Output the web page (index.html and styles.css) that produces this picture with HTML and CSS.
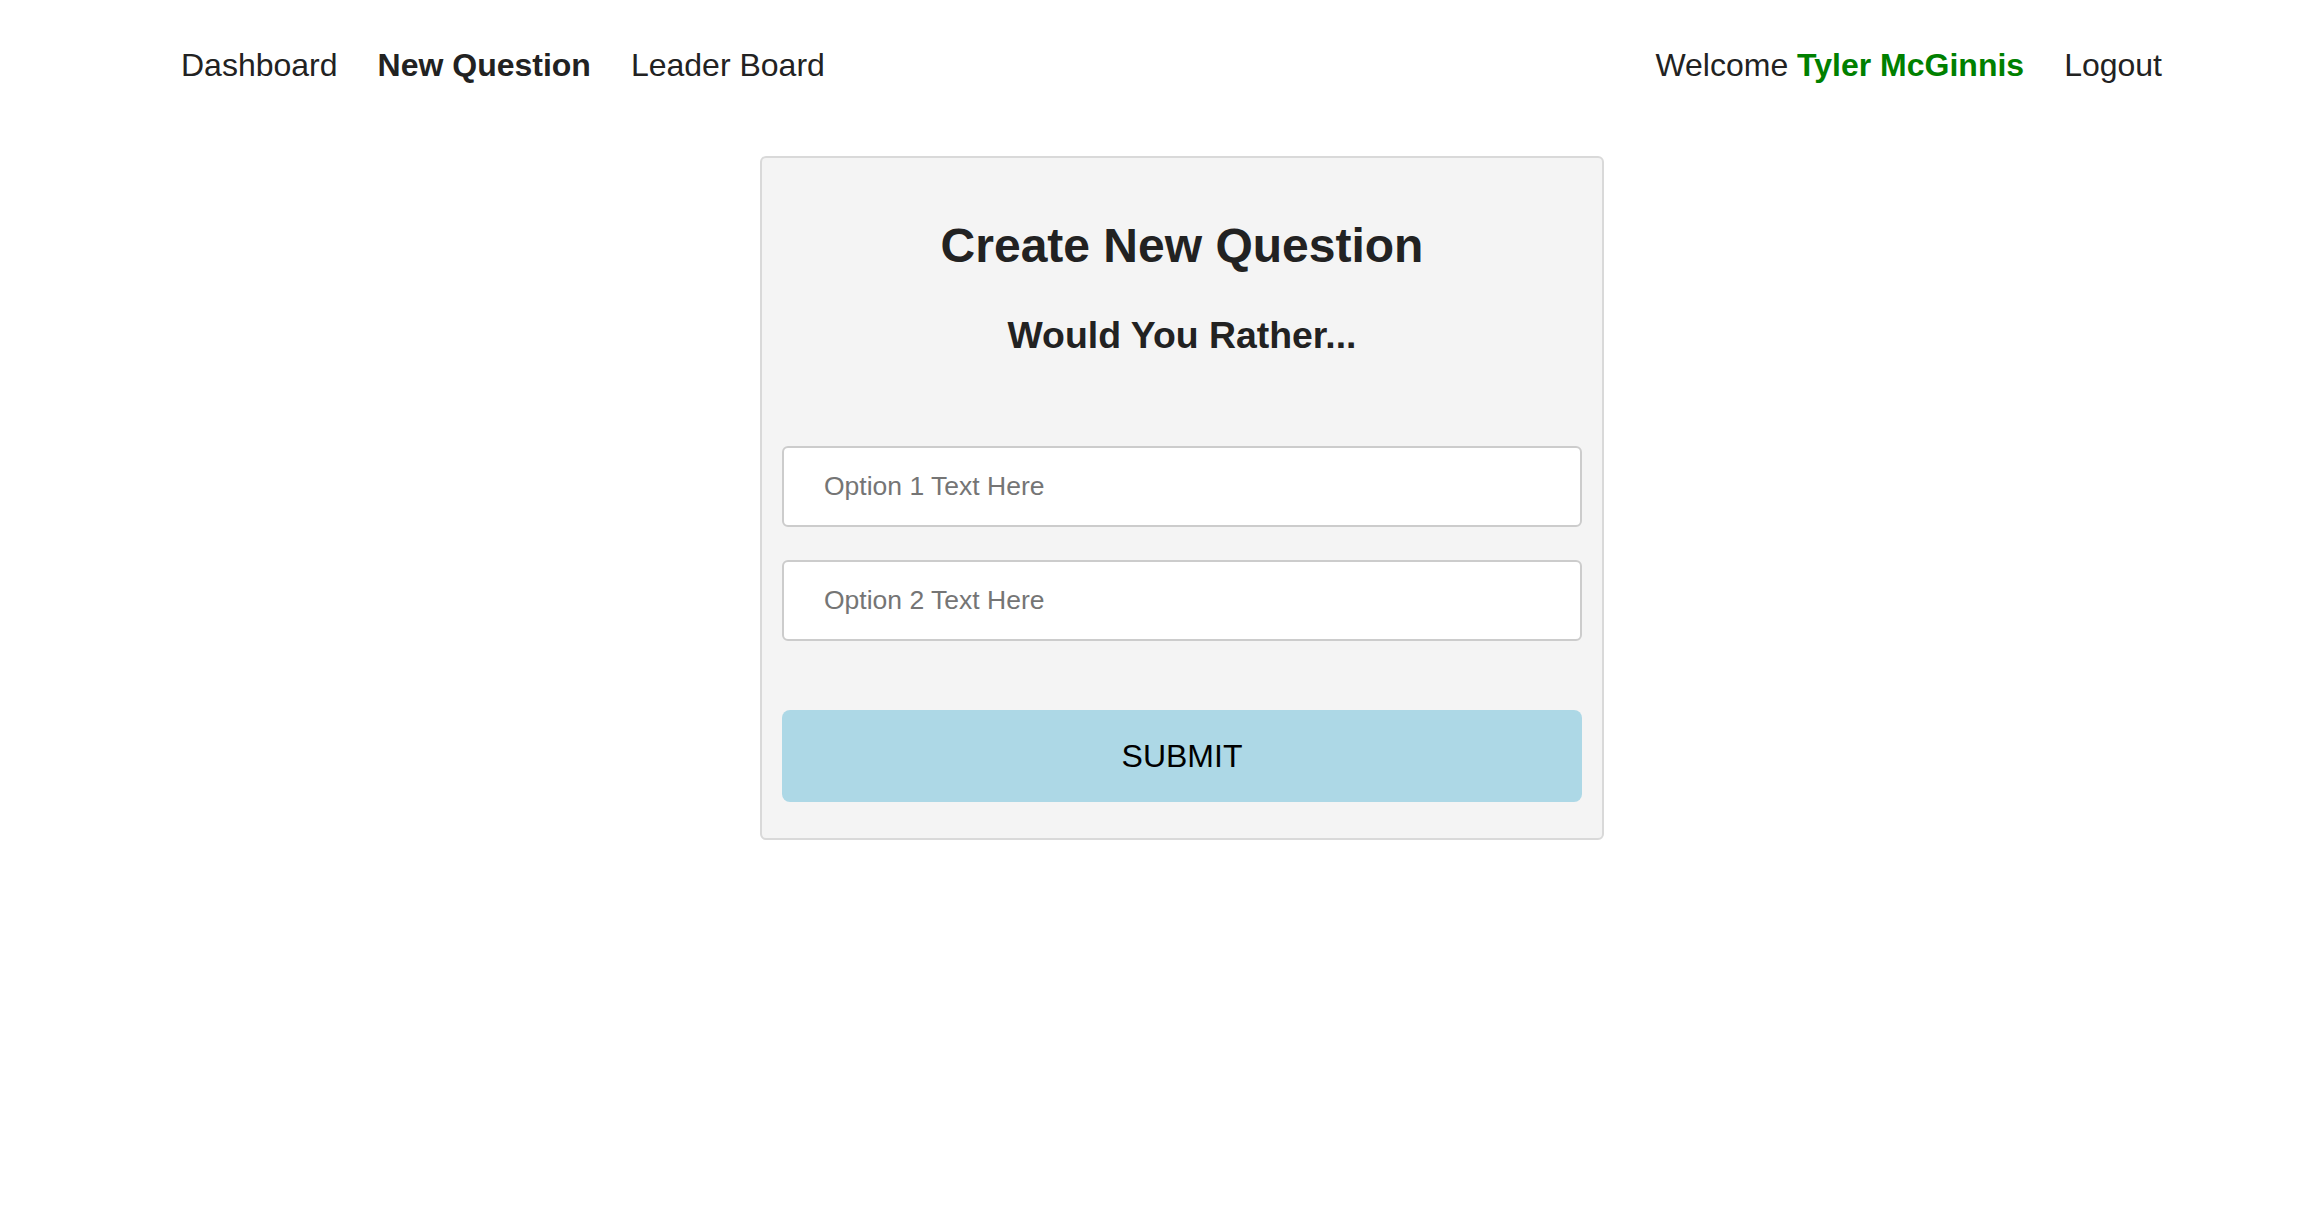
FILE: index.html
```html
<!DOCTYPE html>
<html lang="en">
<head>
<meta charset="utf-8">
<title>Would You Rather - New Question</title>
<link rel="stylesheet" href="styles.css">
</head>
<body>
  <nav class="nav">
    <ul class="nav-group">
      <li class="nav-item">Dashboard</li>
      <li class="nav-item nav-item-active">New Question</li>
      <li class="nav-item">Leader Board</li>
    </ul>
    <ul class="nav-group">
      <li class="nav-item">Welcome <span class="user-name">Tyler McGinnis</span></li>
      <li class="nav-item">Logout</li>
    </ul>
  </nav>
  <main class="main">
    <form class="card">
      <h1 class="card-title">Create New Question</h1>
      <h3 class="card-subtitle">Would You Rather...</h3>
      <input class="option-input option-first" type="text" placeholder="Option 1 Text Here">
      <input class="option-input option-second" type="text" placeholder="Option 2 Text Here">
      <button class="submit-btn" type="button">SUBMIT</button>
    </form>
  </main>
</body>
</html>
```
FILE: styles.css
```css
* {
  box-sizing: border-box;
}

html, body {
  margin: 0;
  padding: 0;
  background: #ffffff;
}

body {
  font-family: "Liberation Sans", Arial, Helvetica, sans-serif;
  color: #222222;
}

.nav {
  display: flex;
  justify-content: space-between;
  padding: 47px 130px 0 161px;
}

.nav-group {
  display: flex;
  list-style: none;
  margin: 0;
  padding: 0;
}

.nav-item {
  margin: 0 20px;
  font-size: 32px;
  line-height: 37px;
  color: #222222;
  white-space: nowrap;
}

.nav-item-active {
  font-weight: bold;
}

.user-name {
  color: #008000;
  font-weight: bold;
}

.main {
  display: flex;
  justify-content: center;
  padding-left: 52px;
  margin-top: 72px;
}

.card {
  width: 844px;
  background: #f4f4f4;
  border: 2px solid #d9d9d9;
  border-radius: 6px;
  padding: 60px 20px 36px;
  display: flex;
  flex-direction: column;
}

.card-title {
  margin: 0 0 40px;
  font-size: 48px;
  line-height: 56px;
  font-weight: bold;
  text-align: center;
  color: #222222;
}

.card-subtitle {
  margin: 0 0 90px;
  font-size: 37.4px;
  line-height: 42px;
  font-weight: bold;
  text-align: center;
  color: #222222;
}

.option-input {
  display: block;
  width: 800px;
  height: 81px;
  margin: 0;
  padding: 0 40px;
  background: #ffffff;
  border: 2px solid #cccccc;
  border-radius: 6px;
  font-family: "Liberation Sans", Arial, Helvetica, sans-serif;
  font-size: 26.5px;
  color: #222222;
  outline: none;
}

.option-input::placeholder {
  color: #757575;
}

.option-first {
  margin-bottom: 33px;
}

.option-second {
  margin-bottom: 69px;
}

.submit-btn {
  display: block;
  width: 800px;
  height: 92px;
  margin: 0;
  padding: 0;
  background: #add8e6;
  border: none;
  border-radius: 8px;
  font-family: "Liberation Sans", Arial, Helvetica, sans-serif;
  font-size: 32px;
  color: #000000;
  cursor: pointer;
}
```
